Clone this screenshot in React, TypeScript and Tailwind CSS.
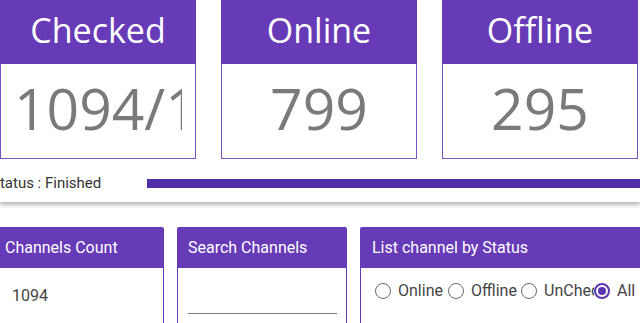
const TOP_CARDS = [
  { title: "Checked", value: "1094/1094" },
  { title: "Online", value: "799" },
  { title: "Offline", value: "295" },
];

const STATUS_OPTIONS = [
  { label: "Online", checked: false },
  { label: "Offline", checked: false },
  { label: "UnChecked", checked: false },
  { label: "All", checked: true },
];

function Radio({ checked }: { checked: boolean }) {
  return checked ? (
    <span className="flex h-[16px] w-[16px] shrink-0 items-center justify-center rounded-full border-2 border-[#5e35b1]">
      <span className="h-[8px] w-[8px] rounded-full bg-[#5e35b1]" />
    </span>
  ) : (
    <span className="h-[16px] w-[16px] shrink-0 rounded-full border-[1.5px] border-[#6b6b6b]" />
  );
}

export default function App() {
  return (
    <div className="h-[323px] w-[640px] overflow-hidden bg-white font-['Roboto',sans-serif]">
      {/* Counters */}
      <div className="flex gap-[25px]">
        {TOP_CARDS.map((card) => (
          <div key={card.title} className="w-[196px] shrink-0">
            <div className="flex h-[64px] items-center justify-center bg-[#673ab7] pb-[4px] font-['Open_Sans',sans-serif] text-[34px] text-white">
              {card.title}
            </div>
            <div className="flex h-[95px] items-center border border-t-0 border-[#7a52c4] px-[13px] pb-[6px]">
              <div className="w-full overflow-hidden whitespace-nowrap text-center font-['Open_Sans',sans-serif] text-[57px] leading-none text-[#7a7a7a]">
                {card.value}
              </div>
            </div>
          </div>
        ))}
      </div>

      {/* Progress */}
      <div className="mt-[6px] flex h-[37px] items-center bg-white shadow-[0_3px_4px_rgba(0,0,0,0.28)]">
        <span className="ml-[-9px] w-[156px] shrink-0 text-[15px] text-[#333]">Status : Finished</span>
        <div className="h-[9px] flex-1 bg-[#512da8]" />
      </div>

      {/* Panels */}
      <div className="ml-[-7px] mt-[25px] flex gap-[13px]">
        <div className="w-[171px] shrink-0">
          <div className="flex h-[41px] items-center rounded-t-[2px] bg-[#673ab7] px-[12px] text-[16px] text-white">
            Channels Count
          </div>
          <div className="h-[60px] border-x border-[#673ab7] px-[18px] pt-[16px] text-[16px] text-[#444]">1094</div>
        </div>

        <div className="w-[170px] shrink-0">
          <div className="flex h-[41px] items-center rounded-t-[2px] bg-[#673ab7] px-[11px] text-[16px] text-white">
            Search Channels
          </div>
          <div className="h-[60px] border-x border-[#673ab7] pl-[10px] pr-[9px] pt-[45px]">
            <div className="h-px bg-[#7a7a7a]" />
          </div>
        </div>

        <div className="w-[300px] shrink-0">
          <div className="flex h-[41px] items-center rounded-t-[2px] bg-[#673ab7] px-[12px] text-[16px] text-white">
            List channel by Status
          </div>
          <div className="flex h-[60px] items-start border-x border-[#673ab7] pl-[14px] pt-[15px]">
            {STATUS_OPTIONS.map((opt) => (
              <div key={opt.label} className="flex items-center">
                <Radio checked={opt.checked} />
                <span className="ml-[7px] w-[50px] overflow-hidden whitespace-nowrap text-[16px] leading-[16px] text-[#444]">
                  {opt.label}
                </span>
              </div>
            ))}
          </div>
        </div>
      </div>
    </div>
  );
}
